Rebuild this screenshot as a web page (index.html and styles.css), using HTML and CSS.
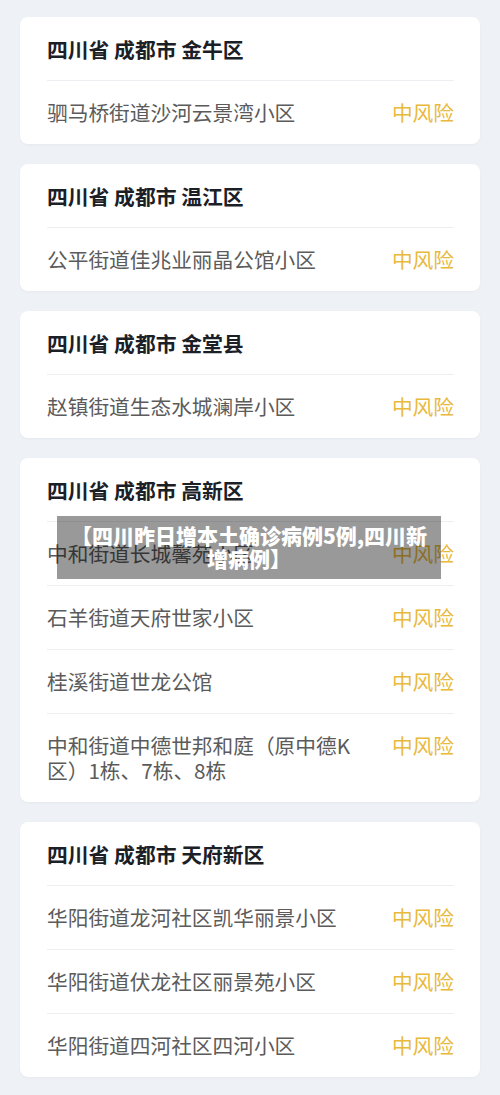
FILE: index.html
```html
<!DOCTYPE html>
<html lang="zh-CN">

<head>
    <meta charset="UTF-8">
    <meta name="viewport" content="width=device-width, initial-scale=1.0">
    <title>中风险地区</title>
    <link rel="stylesheet" href="styles.css">
</head>

<body>
    <div class="page">
        <div class="card">
            <h3 class="card-title">四川省 成都市 金牛区</h3>
            <div class="row"><span class="addr">驷马桥街道沙河云景湾小区</span><span class="level">中风险</span></div>
        </div>

        <div class="card">
            <h3 class="card-title">四川省 成都市 温江区</h3>
            <div class="row"><span class="addr">公平街道佳兆业丽晶公馆小区</span><span class="level">中风险</span></div>
        </div>

        <div class="card">
            <h3 class="card-title">四川省 成都市 金堂县</h3>
            <div class="row"><span class="addr">赵镇街道生态水城澜岸小区</span><span class="level">中风险</span></div>
        </div>

        <div class="card">
            <h3 class="card-title">四川省 成都市 高新区</h3>
            <div class="row"><span class="addr">中和街道长城馨苑小区</span><span class="level">中风险</span></div>
            <div class="row"><span class="addr">石羊街道天府世家小区</span><span class="level">中风险</span></div>
            <div class="row"><span class="addr">桂溪街道世龙公馆</span><span class="level">中风险</span></div>
            <div class="row"><span class="addr">中和街道中德世邦和庭（原中德K区）1栋、7栋、8栋</span><span class="level">中风险</span></div>
        </div>

        <div class="card">
            <h3 class="card-title">四川省 成都市 天府新区</h3>
            <div class="row"><span class="addr">华阳街道龙河社区凯华丽景小区</span><span class="level">中风险</span></div>
            <div class="row"><span class="addr">华阳街道伏龙社区丽景苑小区</span><span class="level">中风险</span></div>
            <div class="row"><span class="addr">华阳街道四河社区四河小区</span><span class="level">中风险</span></div>
        </div>

        <!-- 标题浮层 -->
        <div class="caption">【四川昨日增本土确诊病例5例,四川新增病例】</div>
    </div>
</body>

</html>
```

FILE: styles.css
```css
* {
    margin: 0;
    padding: 0;
    box-sizing: border-box;
}

body {
    background-color: #eef1f5;
    font-family: "Noto Sans CJK SC", "Noto Sans", sans-serif;
}

.page {
    position: relative;
    padding: 17px 20px 18px;
    display: flex;
    flex-direction: column;
    gap: 20px;
}

.card {
    background-color: #fff;
    border-radius: 8px;
    padding: 0 26px 0 27px;
    box-shadow: 0 1px 3px rgba(0, 0, 0, 0.04);
}

.card-title {
    font-size: 20.8px;
    font-weight: bold;
    line-height: 24px;
    color: #1b2026;
    padding: 20px 0 19px;
}

.row {
    display: flex;
    justify-content: space-between;
    align-items: flex-start;
    gap: 40px;
    border-top: 1px solid #eceef1;
    padding: 19px 0;
    font-size: 20.7px;
    line-height: 25px;
}

.addr {
    color: #5b5b5b;
}

.level {
    color: #e9b93c;
    white-space: nowrap;
}

.caption {
    position: absolute;
    left: 57px;
    top: 516px;
    width: 384px;
    height: 63px;
    background-color: rgba(0, 0, 0, 0.4);
    color: #fff;
    font-size: 21px;
    font-weight: 900;
    line-height: 23px;
    text-align: center;
    padding: 8px 10px 0;
}
```
